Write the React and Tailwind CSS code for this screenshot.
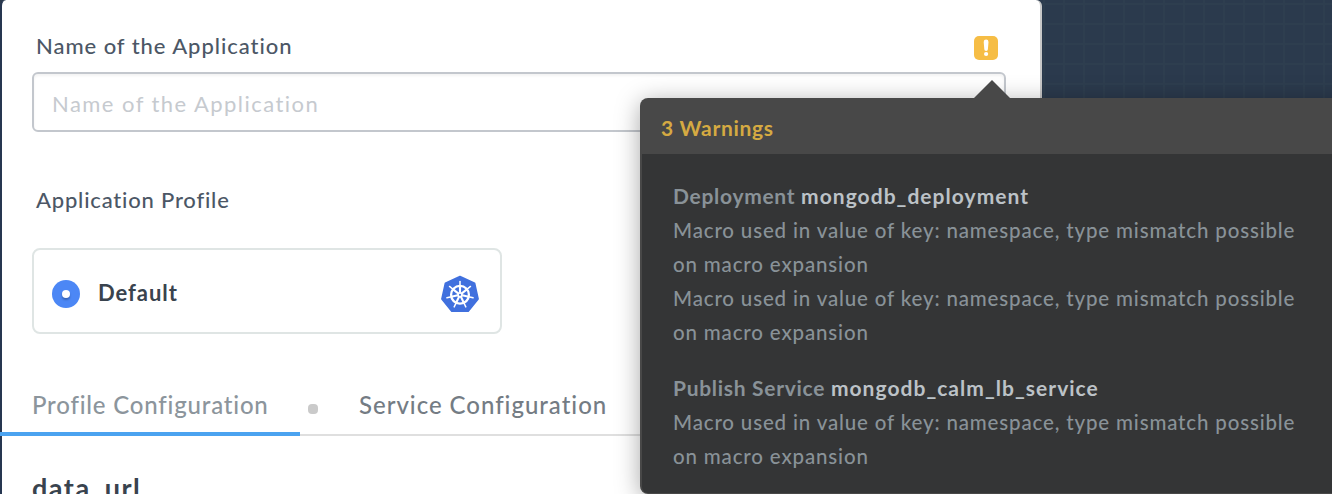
function KubernetesIcon() {
  const spokes = [0, 1, 2, 3, 4, 5, 6];
  return (
    <svg className="block h-[38px] w-[38px]" viewBox="0 0 38 38">
      <path
        d="M19 1.5 33.6 8.3 37.1 23.9 27.2 36.2H10.8L.9 23.9 4.4 8.3Z"
        fill="#4070de"
        stroke="#4070de"
        strokeWidth="1.6"
        strokeLinejoin="round"
      />
      <g stroke="#fff" fill="none">
        <circle cx="19" cy="19.8" r="8.9" strokeWidth="2.3" />
        {spokes.map((i) => (
          <g key={i} transform={`rotate(${(i * 360) / 7} 19 19.8)`}>
            <path d="M19 17.5V11" strokeWidth="2.1" />
            <path d="M19 11V6.4" strokeWidth="1.5" strokeLinecap="round" />
          </g>
        ))}
        <circle cx="19" cy="19.8" r="2" strokeWidth="1.8" />
      </g>
    </svg>
  );
}

function WarningBadge() {
  return (
    <svg className="block h-6 w-6" viewBox="0 0 24 24">
      <rect width="24" height="24" rx="5" fill="#f6bd45" />
      <path
        d="M9.7 6a2.4 2.4 0 0 1 4.8 0l-.6 7.3a1.8 1.8 0 0 1-3.6 0Z"
        fill="#fff"
      />
      <circle cx="12.1" cy="18" r="2.1" fill="#fff" />
    </svg>
  );
}

const MISMATCH = [
  "Macro used in value of key: namespace, type mismatch possible",
  "on macro expansion",
];

function WarningGroup({ kind, name, lines }) {
  return (
    <section className="whitespace-nowrap leading-[34px] text-[#899298]">
      <h3 className="text-[21px] font-bold tracking-[0.7px]">
        {kind} <span className="tracking-[1.03px] text-[#bcc2c7]">{name}</span>
      </h3>
      {lines.map((line, i) => (
        <p key={i} className="text-[20.5px] font-medium tracking-[0.84px]">
          {line}
        </p>
      ))}
    </section>
  );
}

function WarningsPopover() {
  return (
    <div className="absolute left-[640px] top-[98px] h-[396px] w-[720px] rounded-lg bg-[#484848] shadow-[0_4px_24px_rgba(0,0,0,0.35)]">
      <svg
        className="absolute left-[334px] top-[-18px] h-[18px] w-9"
        viewBox="0 0 36 18"
      >
        <path d="M0 18 18 0 36 18Z" fill="#484848" />
      </svg>
      <header className="flex h-14 items-center pl-[21px] pt-1">
        <h2 className="whitespace-nowrap text-[21px] font-bold tracking-[0.7px] text-[#d5aa42]">
          3 Warnings
        </h2>
      </header>
      <div className="ml-0.5 flex h-[339px] flex-col gap-[22px] rounded-bl-md bg-[#343536] pl-[31px] pt-[25px]">
        <WarningGroup
          kind="Deployment"
          name="mongodb_deployment"
          lines={[...MISMATCH, ...MISMATCH]}
        />
        <WarningGroup
          kind="Publish Service"
          name="mongodb_calm_lb_service"
          lines={MISMATCH}
        />
      </div>
    </div>
  );
}

export default function App() {
  return (
    <div className="relative h-[494px] w-[1332px] overflow-hidden bg-[#2b3a4d] bg-[linear-gradient(to_right,#2e3e4f_2px,transparent_2px),linear-gradient(to_bottom,#2e3e4f_2px,transparent_2px)] bg-[length:20px_20px] bg-[position:3px_3px] font-['Lato','Open_Sans',sans-serif] text-[#4c5766]">
      <main className="h-[520px] w-[1042px] rounded-t-[6px] border-l-2 border-r-2 border-l-[#263650] border-r-[#c8c8c8] bg-white">
        <div className="pl-[30px] pr-[34px]">
          <div className="flex h-[72px] items-start justify-between pl-1 pr-2 pt-[30px]">
            <label className="whitespace-nowrap text-[22px] font-medium leading-8 tracking-[0.95px]">
              Name of the Application
            </label>
            <div className="pt-1.5">
              <WarningBadge />
            </div>
          </div>
          <input
            placeholder="Name of the Application"
            className="block h-[60px] w-full rounded-[6px] border-2 border-[#c3c7cd] bg-white px-[18px] pt-0.5 text-[22px] tracking-[1.45px] shadow-[inset_0_2px_3px_rgba(0,0,0,0.05)] outline-none placeholder:text-[#c6cacf]"
          />
          <p className="mt-[52px] pl-1 text-[22px] font-medium leading-8 tracking-[0.8px]">
            Application Profile
          </p>
          <div className="mt-8 flex h-[86px] w-[470px] items-center justify-between rounded-lg border-2 border-[#dfe5e4] pl-[18px] pr-[21px]">
            <div className="flex items-center">
              <span className="mt-1.5 flex h-7 w-7 items-center justify-center rounded-full bg-[#4c87f5]">
                <span className="h-2 w-2 rounded-full bg-white shadow-[0_2px_2px_rgba(0,0,0,0.25)]" />
              </span>
              <span className="ml-[18px] mt-1 text-[22px] font-bold leading-8 tracking-[0.95px] text-[#39434e]">
                Default
              </span>
            </div>
            <div className="pt-1.5">
              <KubernetesIcon />
            </div>
          </div>
        </div>
        <nav className="-ml-0.5 mt-[38px] flex h-16 border-b-2 border-[#dfdfdf] text-[24px] font-medium leading-[34px]">
          <div className="h-16 w-[300px] border-b-4 border-[#4ba3f0] pl-8 pt-4 tracking-[0.8px] text-[#8c959c]">
            Profile Configuration
          </div>
          <span className="ml-2 mt-8 h-2.5 w-2.5 rounded-[4px] bg-[#cacaca]" />
          <div className="ml-[41px] pt-4 tracking-[0.97px] text-[#747c84]">
            Service Configuration
          </div>
        </nav>
        <h2 className="mt-[34px] pl-[30px] text-[27px] font-bold leading-9 tracking-[1.5px] text-[#39434e]">
          data_url
        </h2>
      </main>
      <WarningsPopover />
    </div>
  );
}
